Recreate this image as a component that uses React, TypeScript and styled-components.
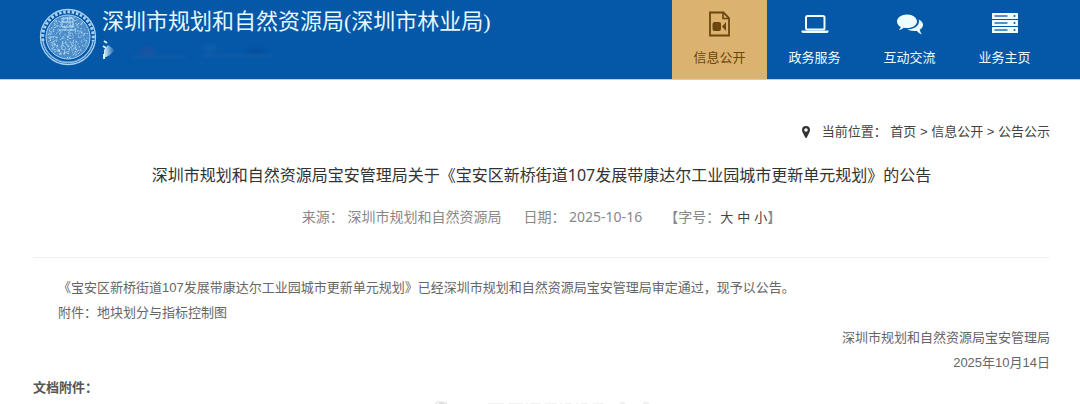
import React from "react";
import styled, { createGlobalStyle } from "styled-components";

const GlobalStyle = createGlobalStyle`
  * { box-sizing: border-box; }
  body {
    margin: 0;
    background: #fff;
    color: #666;
    font: 13px/25px "Liberation Sans", "Noto Sans CJK SC", sans-serif;
    text-spacing-trim: space-all;
  }
  a { color: inherit; text-decoration: none; }
  p, h1, h2 { margin: 0; font-weight: 400; }
  svg { display: block; flex: none; }
`;

const Header = styled.header`
  display: flex;
  justify-content: space-between;
  height: 80px;
  padding: 0 28px 0 39px;
  background: #0557a8;
  border-bottom: 1px solid #a9d6f5;
`;

const Brand = styled.div`
  display: flex;
  gap: 5px;
  padding-top: 8px;
`;

const BrandText = styled.div`
  display: flex;
  flex-direction: column;
  gap: 4px;
`;

const SiteName = styled.p`
  color: #e4f8ff;
  font-family: "Liberation Serif", "Noto Sans CJK SC", serif;
  font-size: 22px;
  line-height: 28px;
  white-space: nowrap;
`;

const Nav = styled.nav`
  display: flex;
`;

const NavLink = styled.a<{ $active?: boolean }>`
  display: flex;
  flex-direction: column;
  align-items: center;
  gap: 8px;
  width: 95px;
  padding-top: 8px;
  line-height: 20px;
  background: ${(p) => (p.$active ? "#dbb36f" : "transparent")};
  color: ${(p) => (p.$active ? "#6b4610" : "#f0fdff")};
`;

const Main = styled.main`
  padding: 39px 30px 0 33px;
`;

const Breadcrumb = styled.nav`
  display: flex;
  align-items: center;
  justify-content: flex-end;
  gap: 12px;
  color: #444;
  line-height: 25px;
`;

const Title = styled.h1`
  padding-top: 18px;
  color: #333;
  text-align: center;
  font: 16px/26px "Noto Sans", "Noto Sans CJK SC", sans-serif;
`;

const Meta = styled.div`
  display: flex;
  justify-content: center;
  gap: 22px;
  padding: 16px 0 27px;
  border-bottom: 1px solid #f0f0f0;
  color: #888;
  font: 14px/25px "Noto Sans", "Noto Sans CJK SC", sans-serif;
`;

const SizeButton = styled.button`
  margin: 0 4px 0 0;
  padding: 0;
  border: 0;
  background: none;
  color: #444;
  font: inherit;
  font-size: 13px;
  cursor: pointer;

  &:last-of-type { margin-right: 0; }
`;

const Article = styled.article`
  padding-top: 17px;
`;

const Paragraph = styled.p`
  padding-left: 25px;
`;

const Signature = styled.p`
  text-align: right;
`;

const AttachmentTitle = styled.h2`
  color: #555;
  font-size: 13px;
  font-weight: 700;
`;

const Footnote = styled.div`
  display: flex;
  justify-content: center;
  padding-top: 1px;
`;

const polar = (r: number, a: number) => [
  29 + r * Math.cos((a * Math.PI) / 180),
  29 + r * Math.sin((a * Math.PI) / 180),
];

/* Short engraved strokes that fill the middle of the seal. */
const engraving = (() => {
  let seed = 11;
  const next = () => (seed = (seed * 16807) % 2147483647) / 2147483647;
  return Array.from({ length: 300 }, () => {
    const [x, y] = polar(Math.sqrt(next()) * 20, next() * 360);
    return `M${x.toFixed(1)} ${y.toFixed(1)}l${(next() * 4 - 2).toFixed(1)} ${(next() * 4 - 2).toFixed(1)}`;
  }).join("");
})();

const Seal = () => (
  <svg width="58" height="58" viewBox="0 0 58 58" fill="none" role="img" aria-label="徽标">
    <circle cx="29" cy="29" r="27.5" stroke="#a9d3f2" strokeWidth="1.3" />
    <path d="M4 33A25.3 25.3 0 1 1 54 33" stroke="#a9d3f2" strokeWidth="3" strokeDasharray="2.6 1.7" />
    <path d="M4 33A25.3 25.3 0 0 0 54 33" stroke="#8abbe4" strokeWidth="1.6" />
    <circle cx="29" cy="29" r="22" fill="#4c8cc8" stroke="#a9d3f2" strokeWidth="1" />
    <path d={engraving} stroke="#b4dcf5" strokeWidth=".8" />
    <path d="M23 10h11v9h-11zM23 14h11M20 22h17" stroke="#c5e7fa" strokeWidth=".9" />
  </svg>
);

/* Faded second line under the site name. */
const FadedLine = () => (
  <svg width="180" height="22" viewBox="0 0 180 22" aria-hidden="true">
    <defs>
      <linearGradient id="fade">
        <stop offset="0" stopColor="#d8f1fb" />
        <stop offset="1" stopColor="#d8f1fb" stopOpacity="0" />
      </linearGradient>
      <filter id="soft"><feGaussianBlur stdDeviation="2" /></filter>
    </defs>
    <path d="M2 1l3 2M1 6l3 2M2 19v-5" stroke="#d8f1fb" strokeWidth="2" />
    <path d="M2 10L6 5L13 10L8 15L2 18z" fill="url(#fade)" />
    <g filter="url(#soft)">
      <ellipse cx="45" cy="11" rx="8" ry="5" fill="#234f9c" opacity=".6" />
      <path d="M30 17h55M100 16h70" stroke="#1c62a8" strokeWidth="3" opacity=".5" />
      <ellipse cx="108" cy="8" rx="8" ry="4" fill="#1668a4" opacity=".4" />
      <ellipse cx="154" cy="11" rx="9" ry="3" fill="#08488f" opacity=".7" />
    </g>
  </svg>
);

const FileVideoIcon = () => (
  <svg width="28" height="32" viewBox="0 0 28 32" fill="none" aria-hidden="true">
    <path d="M4 4.5h13.500l5.500 5.500V27.500H4z" stroke="currentColor" strokeWidth="1.800" />
    <path d="M17 4.500v6H23" stroke="currentColor" strokeWidth="1.600" />
    <rect x="6.500" y="14" width="8.500" height="9" rx="2" fill="currentColor" />
    <path d="M16 18.500l4-4.500v9z" fill="currentColor" />
  </svg>
);

const LaptopIcon = () => (
  <svg width="28" height="32" viewBox="0 0 28 32" fill="none" aria-hidden="true">
    <rect x="5" y="8" width="18.5" height="13.5" rx="1.5" stroke="currentColor" strokeWidth="2" />
    <path d="M.5 22.5h27v1q0 1.500-2 1.500h-23q-2 0-2-1.500z" fill="currentColor" />
  </svg>
);

const CommentsIcon = () => (
  <svg width="28" height="32" viewBox="0 0 28 32" fill="currentColor" aria-hidden="true">
    <path d="M11 6.500C5.500 6.500 1 9.600 1 13.500c0 2.300 1.400 4.200 3.700 5.500-.3 1.300-1 2.200-2 3 2-.2 3.700-1 5-2.200 1.100.2 2.200.3 3.300.3 5.600 0 10-2.900 10-6.600s-4.400-7-10-7z" />
    <path d="M22.700 11.500c2.500 1.200 4.300 3 4.300 5.200 0 2-1.200 3.800-3.300 5 .3 1.600 1 3 2 4.700-2-.5-3.600-1.800-4.900-3.600-3.600.6-7.200 0-9.400-1.500 6.500 0 11.500-3.300 11.500-7.600 0-.8 0-1.500-.2-2.200z" />
  </svg>
);

const ServerIcon = () => (
  <svg width="28" height="32" viewBox="0 0 28 32" aria-hidden="true">
    {[5, 12, 19].map((y) => (
      <g key={y}>
        <rect x="1" y={y} width="26" height="6" rx=".5" fill="currentColor" />
        <path d={`M3.500 ${y + 3}h13`} stroke="#0557a8" strokeWidth="1.300" />
        <circle cx="23.500" cy={y + 3} r="1" fill="#0557a8" />
      </g>
    ))}
  </svg>
);

const MarkerIcon = () => (
  <svg width="8" height="12" viewBox="0 0 8 12" aria-hidden="true">
    <path d="M4 0a4 4 0 0 1 4 4c0 1-.3 1.700-.7 2.500L4.800 11.500q-.8 1-1.600 0L.7 6.500C.3 5.700 0 5 0 4a4 4 0 0 1 4-4zm0 2.200a1.800 1.800 0 1 0 0 3.600 1.800 1.800 0 0 0 0-3.600z" fill="#333" />
  </svg>
);

/* Only the upper edge of the faint mark shows above the fold. */
const Watermark = () => (
  <svg width="218" height="4" viewBox="0 0 218 4" fill="none" stroke="#d4d4d4" aria-hidden="true">
    <path d="M1 4q3-4 8-3t6 3M6 3q4-2 6 1" />
    <path d="M55 3h16M76 3h14M94 2v2M97 3h11M112 3h12M128 2v2M132 3h6M144 2v2M148 3h6M160 3h10M187 2h5M210 2h6" opacity=".7" />
  </svg>
);

const navItems = [
  { label: "信息公开", Icon: FileVideoIcon, active: true },
  { label: "政务服务", Icon: LaptopIcon },
  { label: "互动交流", Icon: CommentsIcon },
  { label: "业务主页", Icon: ServerIcon },
];

export default function App() {
  return (
    <>
      <GlobalStyle />
      <Header>
        <Brand>
          <Seal />
          <BrandText>
            <SiteName>深圳市规划和自然资源局(深圳市林业局)</SiteName>
            <FadedLine />
          </BrandText>
        </Brand>
        <Nav>
          {navItems.map(({ label, Icon, active }) => (
            <NavLink key={label} href="#" $active={active}>
              <Icon />
              {label}
            </NavLink>
          ))}
        </Nav>
      </Header>
      <Main>
        <Breadcrumb>
          <MarkerIcon />
          <span>当前位置： <a href="#">首页</a> &gt; <a href="#">信息公开</a> &gt; <a href="#">公告公示</a></span>
        </Breadcrumb>
        <Title>深圳市规划和自然资源局宝安管理局关于《宝安区新桥街道107发展带康达尔工业园城市更新单元规划》的公告</Title>
        <Meta>
          <span>来源： 深圳市规划和自然资源局</span>
          <span>日期： 2025-10-16</span>
          <span>
            【字号：<SizeButton>大</SizeButton><SizeButton>中</SizeButton><SizeButton>小</SizeButton>】
          </span>
        </Meta>
        <Article>
          <Paragraph>《宝安区新桥街道107发展带康达尔工业园城市更新单元规划》已经深圳市规划和自然资源局宝安管理局审定通过，现予以公告。</Paragraph>
          <Paragraph>附件：地块划分与指标控制图</Paragraph>
          <Signature>深圳市规划和自然资源局宝安管理局</Signature>
          <Signature>2025年10月14日</Signature>
          <AttachmentTitle>文档附件：</AttachmentTitle>
        </Article>
        <Footnote>
          <Watermark />
        </Footnote>
      </Main>
    </>
  );
}
